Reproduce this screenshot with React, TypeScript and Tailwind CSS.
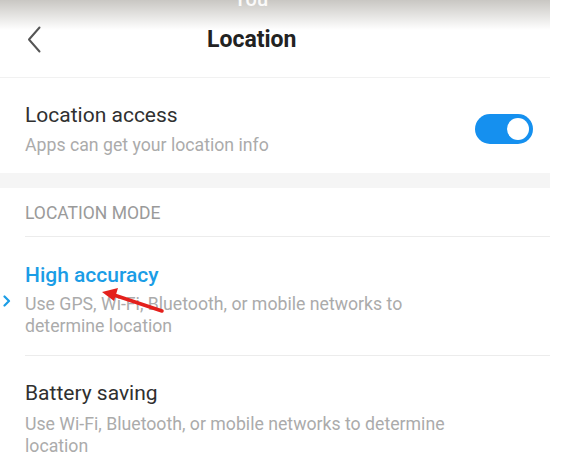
import React from 'react';

function Toggle() {
    return (
        <div className="w-[58px] h-[30px] rounded-full bg-[#1590ef] flex items-center justify-end pr-[4px]">
            <div className="w-[22px] h-[22px] rounded-full bg-white" />
        </div>
    );
}

export default function App() {
    return (
        <div className="w-[568px] h-[460px] bg-white overflow-hidden font-['Roboto','Noto_Sans',sans-serif]">
            <div className="w-[550px]">
                {/* header */}
                <div className="h-[77px] bg-[linear-gradient(to_bottom,#c9c7c3_0px,#ffffff_30px)]">
                    <div className="h-[19px] overflow-hidden pl-[234px]">
                        <span className="block -mt-[13px] text-[20px] leading-[24px] font-medium text-white/90">You</span>
                    </div>
                    <div className="h-[40px] flex items-center pl-[27px]">
                        <svg width="14" height="27" viewBox="0 0 14 27" fill="none">
                            <path d="M12.5 1.5 L2 13.5 L12.5 25.5" stroke="#555" strokeWidth="2" strokeLinecap="round" strokeLinejoin="round" />
                        </svg>
                        <h1 className="ml-[166px] text-[23px] font-bold text-[#222] leading-none">Location</h1>
                    </div>
                </div>

                {/* location access */}
                <div className="h-[96px] border-t border-[#f1f1f1] flex items-center justify-between pt-[6px] pl-[25px] pr-[17px]">
                    <div className="flex flex-col gap-[5px]">
                        <div className="text-[21px] leading-[28px] text-[#303030]">Location access</div>
                        <div className="text-[17.7px] leading-[22px] text-[#ababab]">Apps can get your location info</div>
                    </div>
                    <Toggle />
                </div>

                <div className="h-[15px] bg-[#f5f5f5]" />

                {/* mode */}
                <div className="ml-[25px]">
                    <div className="h-[49px] border-b border-[#ececec] pt-[15px] text-[17.5px] leading-[21px] text-[#9a9a9a]">
                        LOCATION MODE
                    </div>

                    <div className="relative h-[119px] border-b border-[#ececec] pt-[24px]">
                        <div className="text-[21px] leading-[28px] font-medium text-[#1b9de6]">High accuracy</div>
                        <div className="mt-[4px] text-[17.7px] leading-[22px] text-[#ababab]">
                            Use GPS, Wi-Fi, Bluetooth, or mobile networks to<br />determine location
                        </div>
                        <svg className="absolute left-[-22px] top-[58px]" width="8" height="12" viewBox="0 0 8 12" fill="none">
                            <path d="M1.5 1.5 L6 6 L1.5 10.5" stroke="#1b9de6" strokeWidth="2.2" strokeLinecap="round" strokeLinejoin="round" />
                        </svg>
                        <svg className="absolute left-[73px] top-[50px]" width="70" height="28" viewBox="0 0 70 28" fill="none">
                            <path d="M64 24 L16 8" stroke="#e4201c" strokeWidth="3.5" strokeLinecap="round" />
                            <path d="M4 5 L20 1 L16 14 Z" fill="#e4201c" />
                        </svg>
                    </div>

                    <div className="pt-[23px]">
                        <div className="text-[21px] leading-[28px] text-[#303030]">Battery saving</div>
                        <div className="mt-[6px] text-[17.7px] leading-[22px] text-[#ababab]">
                            Use Wi-Fi, Bluetooth, or mobile networks to determine<br />location
                        </div>
                    </div>
                </div>
            </div>
        </div>
    );
}
